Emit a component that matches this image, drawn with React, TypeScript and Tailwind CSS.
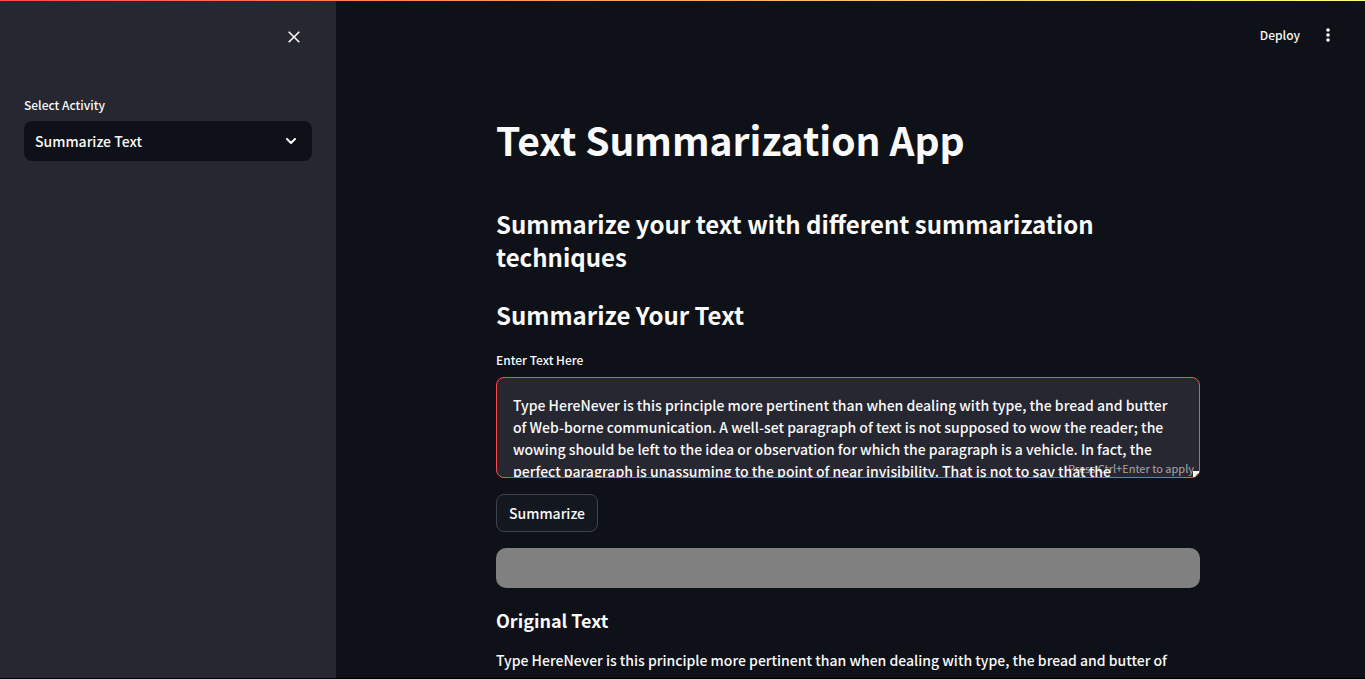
import { useState } from "react";

const OPENING =
  "Type HereNever is this principle more pertinent than when dealing with type, the bread and butter of";

const SOURCE =
  OPENING +
  " Web-borne communication. A well-set paragraph of text is not supposed to wow the reader; the wowing should be left to the idea or observation for which the paragraph is a vehicle. In fact, the perfect paragraph is unassuming to the point of near invisibility. That is not to say that the";

function CloseIcon() {
  return (
    <svg viewBox="0 0 12 12" className="size-3" fill="none" stroke="currentColor" strokeWidth="1.6" aria-hidden="true">
      <path d="M0.7 0.7 11.3 11.3M11.3 0.7 0.7 11.3" />
    </svg>
  );
}

function ChevronIcon() {
  return (
    <svg viewBox="0 0 10 6" className="h-1.5 w-2.5" fill="none" stroke="currentColor" strokeWidth="2" strokeLinecap="round" aria-hidden="true">
      <path d="M1 1 5 5 9 1" strokeLinejoin="round" />
    </svg>
  );
}

function KebabIcon() {
  return (
    <svg viewBox="0 0 4 14" className="h-3.5 w-1" fill="currentColor" aria-hidden="true">
      <circle cx="2" cy="2" r="1.8" />
      <circle cx="2" cy="7" r="1.8" />
      <circle cx="2" cy="12" r="1.8" />
    </svg>
  );
}

function ResizeCorner() {
  return (
    <svg viewBox="0 0 6 6" className="pointer-events-none absolute right-px bottom-px size-1.5" fill="currentColor" aria-hidden="true">
      <path d="M0 0H6V1.5L1.5 6H0Z" />
    </svg>
  );
}

function Sidebar() {
  const [activity, setActivity] = useState("Summarize Text");
  return (
    <aside className="w-84 shrink-0 bg-[#262730] px-6 pt-6">
      <div className="flex justify-end pr-1.5">
        <button type="button" aria-label="Close sidebar" className="grid size-6 place-items-center">
          <CloseIcon />
        </button>
      </div>
      <label htmlFor="activity" className="mt-11 block text-[12px] leading-6">
        Select Activity
      </label>
      <div className="mt-1 grid items-center">
        <select
          id="activity"
          value={activity}
          onChange={(e) => setActivity(e.target.value)}
          className="col-start-1 row-start-1 h-10 w-full appearance-none rounded-lg bg-[#0e1117] px-[11px] text-[14px]"
        >
          <option>Summarize Text</option>
        </select>
        <span className="pointer-events-none col-start-1 row-start-1 mr-4 justify-self-end">
          <ChevronIcon />
        </span>
      </div>
    </aside>
  );
}

export default function App() {
  const [text, setText] = useState(SOURCE);
  return (
    <div className="h-screen overflow-hidden border-b border-black bg-[#0e1117] font-['Noto_Sans_CJK_SC','Noto_Sans',sans-serif] font-medium text-[#fafafa]">
      <div className="flex h-full flex-col">
        <div className="h-px shrink-0 bg-linear-to-r from-[#ff4b4b] to-[#fffd80]" />
        <div className="flex min-h-0 flex-1">
          <Sidebar />
          <div className="min-w-0 flex-1 overflow-hidden pr-[5px]">
            <header className="flex h-17 items-center justify-end gap-[26px] pr-[30px]">
              <button type="button" className="text-[12px] leading-5">
                Deploy
              </button>
              <button type="button" aria-label="Main menu" className="py-1">
                <KebabIcon />
              </button>
            </header>
            <main className="mx-auto max-w-[704px] pt-[42px]">
              <h1 className="text-[39px] leading-14 font-bold">Text Summarization App</h1>
              <h2 className="mt-10 text-[24px] leading-[33px] font-bold">
                Summarize your text with different summarization techniques
              </h2>
              <h2 className="mt-[25px] text-[24px] leading-[33px] font-bold">Summarize Your Text</h2>
              <label htmlFor="source" className="mt-[17px] block text-[12px] leading-6">
                Enter Text Here
              </label>
              <div className="relative mt-[5px]">
                <textarea
                  id="source"
                  value={text}
                  onChange={(e) => setText(e.target.value)}
                  className="block h-[101px] w-full resize-none overflow-hidden rounded-lg border border-[#ff4b4b] bg-[#262730] px-4 pt-4 text-[14px] leading-[22px] outline-none"
                />
                <span className="pointer-events-none absolute right-1.5 bottom-0.5 text-[11px] leading-4 font-normal text-[#fafafa]/60">
                  Press Ctrl+Enter to apply
                </span>
                <ResizeCorner />
              </div>
              <button
                type="button"
                className="mt-4 block h-[38px] rounded-lg border border-[#41434c] bg-[#131720] px-3 text-[14px]"
              >
                Summarize
              </button>
              <div className="mt-4 h-10 rounded-[10px] bg-[#808080]" />
              <h3 className="mt-4 text-[18px] leading-8 font-bold">Original Text</h3>
              <p className="mt-[11px] text-[14px] leading-[26px]">{OPENING}</p>
            </main>
          </div>
        </div>
      </div>
    </div>
  );
}
